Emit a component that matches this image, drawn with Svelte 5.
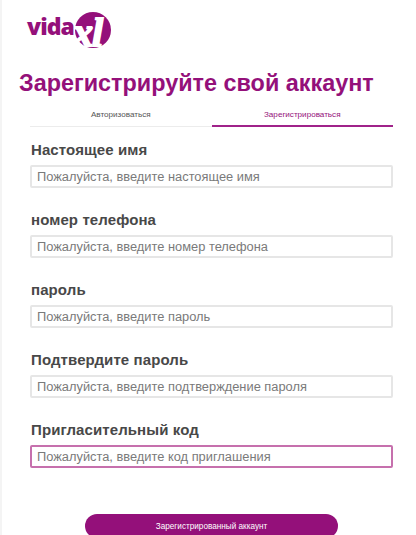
<script>
  const fields = [
    { label: 'Настоящее имя', placeholder: 'Пожалуйста, введите настоящее имя' },
    { label: 'номер телефона', placeholder: 'Пожалуйста, введите номер телефона' },
    { label: 'пароль', placeholder: 'Пожалуйста, введите пароль' },
    { label: 'Подтвердите пароль', placeholder: 'Пожалуйста, введите подтверждение пароля' },
    { label: 'Пригласительный код', placeholder: 'Пожалуйста, введите код приглашения', focus: true }
  ];
</script>

<div class="page">
  <header class="logo">
    <svg width="90" height="42" viewBox="0 0 90 42" aria-label="vidaXL">
      <circle cx="66" cy="20" r="18" fill="#94107a"/>
      <text x="0" y="25" class="vida">vida</text>
      <text x="46" y="36" class="xl">xl</text>
    </svg>
  </header>
  <h1>Зарегистрируйте свой аккаунт</h1>
  <nav class="tabs">
    <button class="tab">Авторизоваться</button>
    <button class="tab active">Зарегистрироваться</button>
  </nav>
  <form class="form">
    {#each fields as f}
      <label class="field">
        <span>{f.label}</span>
        <input class:focus={f.focus} placeholder={f.placeholder} />
      </label>
    {/each}
  </form>
  <div class="actions">
    <button class="submit">Зарегистрированный аккаунт</button>
  </div>
</div>

<style>
  :global(body) {
    margin: 0;
    background: #fff;
    overflow: hidden;
  }
  .page {
    box-sizing: border-box;
    width: 416px;
    height: 535px;
    border-left: 2px solid #f4f4f4;
    font-family: "Liberation Sans", Arial, sans-serif;
    overflow: hidden;
  }
  .logo {
    height: 50px;
    padding: 10px 0 0 25px;
    box-sizing: border-box;
  }
  .logo svg {
    display: block;
    overflow: visible;
  }
  .vida {
    font: 800 23px "Open Sans", sans-serif;
    fill: #94107a;
    letter-spacing: -0.9px;
  }
  .xl {
    font: italic 700 40px "Liberation Serif", serif;
    fill: #fff;
    stroke: #fff;
    stroke-width: 1.8px;
    letter-spacing: -1px;
  }
  h1 {
    margin: 18px 0 0 17px;
    font-size: 23.4px;
    line-height: 30px;
    font-weight: 700;
    color: #94107a;
    white-space: nowrap;
  }
  .tabs {
    display: grid;
    grid-template-columns: 1fr 1fr;
    margin: 6px 23px 0 28px;
    border-bottom: 1px solid #ececec;
  }
  .tab {
    height: 23px;
    padding: 0;
    margin-bottom: -1px;
    border: 0;
    border-bottom: 2px solid transparent;
    background: none;
    font: 8.1px "Liberation Sans", Arial, sans-serif;
    color: #555;
  }
  .tab.active {
    color: #94107a;
    border-bottom-color: #a0238a;
  }
  .form {
    display: flex;
    flex-direction: column;
    gap: 23px;
    margin: 14px 23px 0 28px;
  }
  .field {
    display: flex;
    flex-direction: column;
    gap: 6px;
  }
  .field span {
    padding-left: 1px;
    font-size: 15px;
    line-height: 18px;
    font-weight: 700;
    letter-spacing: 0.1px;
    color: #484848;
  }
  input {
    box-sizing: border-box;
    width: 100%;
    height: 23px;
    padding: 0 5px;
    border: 2px solid #e6e6e6;
    border-radius: 2px;
    font: 12.85px "Liberation Sans", Arial, sans-serif;
    outline: none;
  }
  input::placeholder {
    color: #7a7a7a;
    opacity: 1;
  }
  input.focus {
    border-color: #c670ad;
  }
  .actions {
    display: flex;
    justify-content: center;
    margin-top: 46px;
    padding-left: 5px;
  }
  .submit {
    width: 253px;
    height: 24px;
    border: 0;
    border-radius: 12px;
    background: #94107a;
    color: #fff;
    font: 8.2px "Liberation Sans", Arial, sans-serif;
  }
</style>
